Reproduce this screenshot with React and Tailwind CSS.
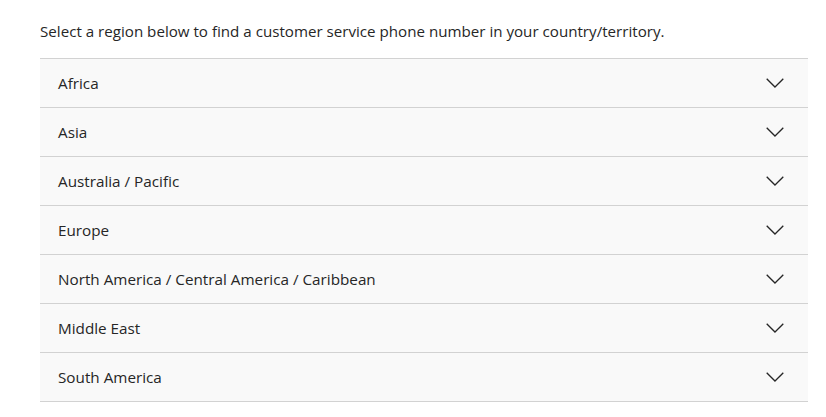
import React from "react";

const regions = [
  "Africa",
  "Asia",
  "Australia / Pacific",
  "Europe",
  "North America / Central America / Caribbean",
  "Middle East",
  "South America",
];

function Chevron() {
  return (
    <svg width="18" height="10" viewBox="0 0 18 10" fill="none" className="block">
      <path d="M0.7 0.7 L9 9 L17.3 0.7" stroke="#262626" strokeWidth="1.3" />
    </svg>
  );
}

export default function App() {
  return (
    <div className="bg-white w-[826px] h-[417px] overflow-hidden text-[#262626]" style={{ fontFamily: '"Open Sans", "Noto Sans", sans-serif' }}>
      <div className="pl-[40px] pr-[18px] pt-[20px]">
        <p className="text-[15.15px] leading-[22px] mb-[16px]">
          Select a region below to find a customer service phone number in your country/territory.
        </p>
        <div className="border-t border-[#d2d2d2]">
          {regions.map((r) => (
            <div key={r} className="flex items-center justify-between h-[49px] border-b border-[#d2d2d2] bg-[#f9f9f9] pl-[18px] pr-[24px]">
              <span className="text-[15.25px]">{r}</span>
              <Chevron />
            </div>
          ))}
        </div>
      </div>
    </div>
  );
}
